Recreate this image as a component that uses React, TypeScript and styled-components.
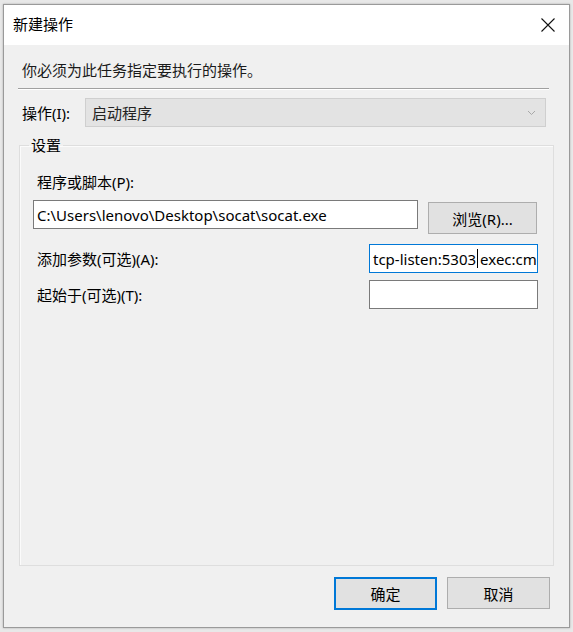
import React from "react";
import styled, { createGlobalStyle } from "styled-components";

const Global = createGlobalStyle`
  html, body { margin: 0; padding: 0; background: #c9c9c9; }
  body { width: 573px; height: 632px; overflow: hidden; }
  * { box-sizing: border-box; }
`;

const FONT = `"Noto Sans", "Noto Sans CJK SC", sans-serif`;

const Screen = styled.div`
  width: 573px;
  height: 632px;
  padding: 4px 3px 4px 3px;
  background: #e8e8e8;
  font-family: ${FONT};
  font-size: 15px;
  color: #000;
`;

const Window = styled.div`
  width: 567px;
  height: 624px;
  border: 1px solid #9a9a9a;
  background: #f0f0f0;
  display: flex;
  flex-direction: column;
  box-shadow: 0 0 2px rgba(0,0,0,0.25);
`;

const TitleBar = styled.div`
  height: 40px;
  background: #ffffff;
  display: flex;
  align-items: center;
  justify-content: space-between;
  padding: 0 14px 0 9px;
  flex: none;
`;

const Title = styled.span`
  font-size: 15px;
  line-height: 20px;
  padding-bottom: 2px;
`;

const CloseIcon = () => (
  <svg width="14" height="14" viewBox="0 0 14 14" style={{ display: "block" }}>
    <path d="M0.5 0.5 L13.5 13.5 M13.5 0.5 L0.5 13.5" stroke="#111" strokeWidth="1.1" fill="none" />
  </svg>
);

const Body = styled.div`
  flex: 1;
  display: flex;
  flex-direction: column;
  padding: 15px 15px 0 14px;
`;

const Instruction = styled.div`
  font-size: 15px;
  line-height: 20px;
  padding-left: 4px;
  color: #1a1a1a;
`;

const Separator = styled.div`
  height: 2px;
  margin: 8px 5px 0 0;
  border-top: 1px solid #a0a0a0;
  border-bottom: 1px solid #ffffff;
`;

const ActionRow = styled.div`
  display: flex;
  align-items: center;
  margin: 8px 8px 0 0;
  padding-left: 4px;
`;

const ActionLabel = styled.label`
  width: 63px;
  flex: none;
`;

const Combo = styled.div`
  flex: 1;
  height: 29px;
  background: #e3e3e3;
  border: 1px solid #cfcfcf;
  display: flex;
  align-items: center;
  justify-content: space-between;
  padding: 0 9px 0 6px;
  color: #222;
`;

const Chevron = () => (
  <svg width="9" height="6" viewBox="0 0 9 6" style={{ display: "block" }}>
    <path d="M1 1 L4.5 4.5 L8 1" stroke="#a8a8a8" strokeWidth="1" fill="none" />
  </svg>
);

const Group = styled.fieldset`
  margin: 8px 0 0 1px;
  width: 535px;
  height: 431px;
  border: 1px solid #dedede;
  box-shadow: inset 1px 1px 0 #fbfbfb;
  padding: 17px 15px 0 13px;
  display: flex;
  flex-direction: column;
`;

const Legend = styled.legend`
  padding: 0 2px;
  margin-left: -4px;
  font-size: 15px;
  line-height: 20px;
`;

const FieldLabel = styled.label`
  display: block;
  line-height: 20px;
  padding-left: 4px;
`;

const PathRow = styled.div`
  display: flex;
  align-items: flex-start;
  gap: 10px;
  margin-top: 8px;
`;

const TextBox = styled.div<{ $focused?: boolean; $width: number }>`
  width: ${(p) => p.$width}px;
  height: 29px;
  background: #fff;
  border: 1px solid ${(p) => (p.$focused ? "#0078d7" : "#7a7a7a")};
  display: flex;
  align-items: center;
  padding-left: 3px;
  overflow: hidden;
  white-space: nowrap;
  flex: none;
`;

const ArgsText = styled.span`
  white-space: pre;
  flex: none;
`;

const Caret = styled.span`
  display: block;
  flex: none;
  width: 1px;
  height: 19px;
  background: #000;
  margin: 0 2px 0 1px;
`;

const Button = styled.button<{ $default?: boolean; $width: number }>`
  width: ${(p) => p.$width}px;
  height: ${(p) => (p.$default ? 33 : 32)}px;
  background: #e1e1e1;
  border: ${(p) => (p.$default ? "2px solid #0078d7" : "1px solid #adadad")};
  font-family: ${FONT};
  font-size: 15px;
  color: #000;
  padding: 0;
  flex: none;
`;

const OptRow = styled.div<{ $top: number }>`
  display: flex;
  align-items: center;
  justify-content: space-between;
  margin-top: ${(p) => p.$top}px;
`;

const Footer = styled.div`
  display: flex;
  justify-content: flex-end;
  gap: 10px;
  padding: 11px 4px 0 0;
`;

export default function App() {
  return (
    <>
      <Global />
      <Screen>
        <Window>
          <TitleBar>
            <Title>新建操作</Title>
            <CloseIcon />
          </TitleBar>
          <Body>
            <Instruction>你必须为此任务指定要执行的操作。</Instruction>
            <Separator />
            <ActionRow>
              <ActionLabel>操作(I):</ActionLabel>
              <Combo>
                <span>启动程序</span>
                <Chevron />
              </Combo>
            </ActionRow>
            <Group>
              <Legend>设置</Legend>
              <FieldLabel>程序或脚本(P):</FieldLabel>
              <PathRow>
                <TextBox $width={385}>C:\Users\lenovo\Desktop\socat\socat.exe</TextBox>
                <Button $width={109} style={{ marginTop: 2 }}>浏览(R)...</Button>
              </PathRow>
              <OptRow $top={10}>
                <FieldLabel>添加参数(可选)(A):</FieldLabel>
                <TextBox $width={169} $focused>
                  <ArgsText>tcp-listen:5303</ArgsText>
                  <Caret />
                  <ArgsText>exec:cmd.exe</ArgsText>
                </TextBox>
              </OptRow>
              <OptRow $top={7}>
                <FieldLabel>起始于(可选)(T):</FieldLabel>
                <TextBox $width={169} />
              </OptRow>
            </Group>
            <Footer>
              <Button $default $width={103}>确定</Button>
              <Button $width={103}>取消</Button>
            </Footer>
          </Body>
        </Window>
      </Screen>
    </>
  );
}
